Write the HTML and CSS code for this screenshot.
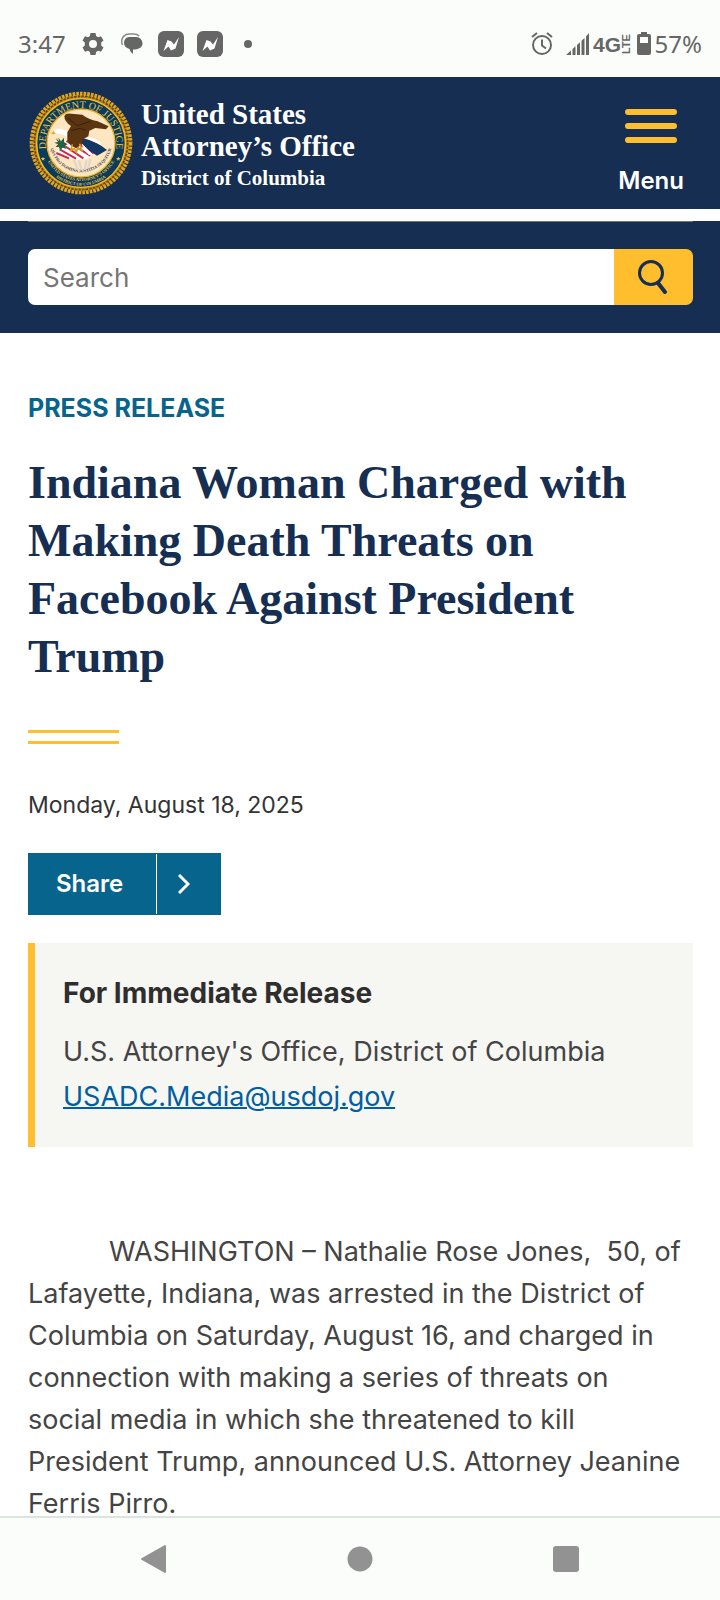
FILE: index.html
```html
<!DOCTYPE html>
<html lang="en">
<head>
<meta charset="utf-8">
<meta name="viewport" content="width=device-width, initial-scale=1">
<title>Press Release</title>
<link rel="stylesheet" href="styles.css">
</head>
<body>
<div class="status">
  <div class="status-left">
    <span class="time">3:47</span>
    <svg class="gear" width="22" height="22" viewBox="0 0 22 22" fill="#666"><path fill-rule="evenodd" d="M8.5 0h5l.6 3 2 1.200 2.900-1 2.500 4.300-2.300 2v3l2.300 2-2.500 4.300-2.900-1-2 1.200-.6 3h-5l-.6-3-2-1.200-2.900 1L.5 14.500l2.300-2v-3l-2.300-2L3 3.200l2.900 1 2-1.200zM11 7a4 4 0 1 0 0 8 4 4 0 0 0 0-8z"/></svg>
    <svg class="bubble" width="22" height="22" viewBox="0 0 22 22" fill="#666"><path d="M8 4h7c4 0 6.500 3 6.500 6.500S18.500 16 14 16.500h-2V21c-2-1.500-3-3-3.500-5C5 15 3 13 3 10s2-6 5-6z"/><path d="M1.500 12C-1 6 3 1 8 1h5c3 0 4 .8 5 2" fill="none" stroke="#8a8a8a" stroke-width="1.500"/></svg>
    <svg width="26" height="26" viewBox="0 0 26 26"><rect width="26" height="26" rx="6" fill="#666"/><path d="M5.500 20 9.500 9l4 1.500 2.500 3L21 6l-3.500 11.500-4.500 2-2.500-4z" fill="#fff"/></svg>
    <svg width="26" height="26" viewBox="0 0 26 26"><rect width="26" height="26" rx="6" fill="#666"/><path d="M5.500 20 9.500 9l4 1.500 2.500 3L21 6l-3.500 11.500-4.500 2-2.500-4z" fill="#fff"/></svg>
    <span class="dot"></span>
  </div>
  <div class="status-right">
    <svg class="alarm" width="22" height="24" viewBox="0 0 22 24" fill="none" stroke="#666" stroke-width="2"><circle cx="11" cy="13" r="9"/><path d="M11 7.500v6l4 3M1 5l5-4M21 5l-5-4"/></svg>
    <svg width="24" height="24" viewBox="0 0 24 24" fill="#666"><path d="M0 23 5 18.500V23zM6.500 17l3-2.700V23h-3zM11 13l3-2.800V23h-3zM15.500 8.800l3-2.800V23h-3zM20 4.600l3-3.600v22h-3z"/></svg>
    <svg class="lte" width="38" height="24" viewBox="0 0 38 24" fill="#666"><text class="fourg" x="0" y="20">4G</text><text class="lte-text" transform="translate(37 22) rotate(-90)">LTE</text></svg>
    <svg class="battery" width="14" height="23" viewBox="0 0 14 23"><path fill-rule="evenodd" fill="#666" d="M4 0h6v2h2q2 0 2 2v17q0 2-2 2H2q-2 0-2-2V4q0-2 2-2h2zM3 5v6h8V5z"/></svg>
    <span class="time">57%</span>
  </div>
</div>

<header class="masthead">
  <a class="brand" href="#">
    <svg class="seal" viewBox="0 0 312 312" role="img" aria-label="Department of Justice seal">
      <defs>
        <path id="arcTop" d="M52 177A106 106 0 1 1 260 177"/>
        <path id="arcMotto" d="M62 150A94 94 0 0 0 250 150"/>
        <path id="arcOffice" d="M42 156A114 114 0 0 0 270 156"/>
        <path id="arcDistrict" d="M28 156A128 128 0 0 0 284 156"/>
      </defs>
      <circle cx="156" cy="156" r="144" fill="#c88a0c"/>
      <circle cx="156" cy="156" r="148" fill="none" stroke="#e2a51a" stroke-width="12" stroke-dasharray="8 3"/>
      <circle cx="156" cy="156" r="140" fill="none" stroke="#5e430c" stroke-width="5" stroke-dasharray="7 4"/>
      <circle cx="156" cy="156" r="133" fill="#0b3b5c" stroke="#edbb31" stroke-width="4"/>
      <circle cx="156" cy="156" r="102" fill="#fee6c0" stroke="#f0b323" stroke-width="4"/>
      <text class="seal-top"><textPath href="#arcTop" startOffset="50%">DEPARTMENT OF JUSTICE</textPath></text>
      <text class="seal-motto"><textPath href="#arcMotto" startOffset="50%">QUI PRO DOMINA JUSTITIA SEQUITUR</textPath></text>
      <text class="seal-small"><textPath href="#arcOffice" startOffset="50%">UNITED STATES ATTORNEY’S OFFICE</textPath></text>
      <text class="seal-small"><textPath href="#arcDistrict" startOffset="50%">DISTRICT OF COLUMBIA</textPath></text>
      <path d="m42 197 2 4 5 .5-4 3 1 5-4-3-4 3 1-5-4-3 5-.5zM268 197l2 4 5 .5-4 3 1 5-4-3-4 3 1-5-4-3 5-.5z" fill="#edbb31"/>
      <path d="M134 205 146 236M150 208 158 238M172 208 168 236M184 204 178 232" stroke="#ddd8d0" stroke-width="7"/>
      <path d="M116 142 166 145 203 184 174 203 142 207 78 190 96 164z" fill="#fff"/>
      <path d="m112 150 72 44M103 162l60 40M92 175l49 28M82 186l38 16M124 143l70 44" stroke="#c92b4b" stroke-width="6"/>
      <path d="M158 140Q204 151 234 177L204 194Q171 172 158 158z" fill="#123765"/>
      <path d="M159 158 193 192 180 192 162 174zM169 141l46 20-2-9-28-14z" fill="#fff"/>
      <path d="M80 141 91 151 87 139 96 151 105 140 105 153 116 160 106 164 113 174 101 170 93 178 90 168 80 168 87 160 76 155 87 153z" fill="#206342"/>
      <path d="M67 125Q78 111 96 114L119 121 113 137Q95 125 80 128Z" fill="#fff"/>
      <path d="m65 127 9-7 6 8-7 2z" fill="#e7aa20"/>
      <path d="M106 75Q110 66 127 68L160 71Q178 85 206 91L239 106 231 115 199 111 181 119 178 136 162 145 158 161 142 171 126 164 115 150 115 124 126 105Q106 92 106 75z" fill="#5a3510"/>
      <path d="m115 80 30 24 40-13M126 119l28-7 17 6" stroke="#342212" stroke-width="3" fill="none"/>
      <path d="m130 160-4 18 10-6 6 12 4-13 12 7-6-20" fill="none" stroke="#d99b18" stroke-width="5"/>
    </svg>
    <span class="brand-text">
      <span class="brand-main">United States<br>Attorney’s Office</span>
      <span class="brand-sub">District of Columbia</span>
    </span>
  </a>
  <button class="menu" type="button">
    <svg width="52" height="34" viewBox="0 0 52 34" stroke="#ffbe2e" stroke-width="6" stroke-linecap="round"><path d="M3 3h46M3 17h46M3 31h46"/></svg>
    <span>Menu</span>
  </button>
</header>

<div class="search-band">
  <form class="search" role="search">
    <input class="search-input" type="search" placeholder="Search" aria-label="Search">
    <button class="search-button" type="button" aria-label="Search">
      <svg width="32" height="36" viewBox="0 0 32 36" fill="none" stroke="#162e51" stroke-width="3" stroke-linecap="round"><circle cx="13" cy="14" r="11.500"/><path d="M20 24l7 9" stroke-width="4"/></svg>
    </button>
  </form>
</div>

<main class="content">
  <p class="kicker">PRESS RELEASE</p>
  <h1 class="title">Indiana Woman Charged with Making Death Threats on Facebook Against President Trump</h1>
  <div class="rule"></div>
  <p class="date">Monday, August 18, 2025</p>
  <button class="share" type="button">
    <span class="share-label">Share</span>
    <span class="share-arrow"><svg width="12" height="20" viewBox="0 0 12 20" fill="none" stroke="#fff" stroke-width="3"><path d="m1 1 9 9-9 9"/></svg></span>
  </button>
  <section class="notice">
    <h2 class="notice-title">For Immediate Release</h2>
    <div class="notice-line">U.S. Attorney's Office, District of Columbia</div>
    <div class="notice-line"><a class="mail" href="mailto:USADC.Media@usdoj.gov">USADC.Media@usdoj.gov</a></div>
  </section>
  <p class="story">WASHINGTON – Nathalie Rose Jones,&nbsp; 50, of<br>Lafayette, Indiana, was arrested in the District of<br>Columbia on Saturday, August 16, and charged in<br>connection with making a series of threats on<br>social media in which she threatened to kill<br>President Trump, announced U.S. Attorney Jeanine<br>Ferris Pirro.</p>
</main>

<nav class="navbar" aria-label="System">
  <button class="nav-button" type="button" aria-label="Back"><svg width="28" height="30" viewBox="0 0 28 30"><path d="M25 2v26L2 15z" fill="#929292" stroke="#929292" stroke-width="2" stroke-linejoin="round"/></svg></button>
  <button class="nav-button" type="button" aria-label="Home"><svg width="26" height="26" viewBox="0 0 26 26"><circle cx="13" cy="13" r="12.500" fill="#929292"/></svg></button>
  <button class="nav-button" type="button" aria-label="Recents"><svg width="28" height="28" viewBox="0 0 28 28"><rect x="1" y="1" width="26" height="26" rx="3" fill="#929292"/></svg></button>
</nav>
</body>
</html>
```
FILE: styles.css
```css
* { box-sizing: border-box; }
body {
  margin: 0;
  height: 100vh;
  overflow: hidden;
  display: flex;
  flex-direction: column;
  background: #fff;
  color: #444;
  font-family: "Inter", "Liberation Sans", sans-serif;
}
button { border: 0; padding: 0; background: none; font: inherit; color: inherit; }
svg { display: block; flex: none; }
p, h1, h2 { margin: 0; }

.status {
  flex: none;
  display: flex;
  justify-content: space-between;
  height: 77px;
  padding: 10px 18px 0;
  background: #fbfdfa;
  color: #666;
}
.status-left, .status-right { display: flex; align-items: center; }
.status-left { gap: 13px; }
.gear { margin-left: 3px; }
.bubble { margin: 0 2px 0 4px; }
.time { font-family: "Noto Sans", sans-serif; font-size: 24px; line-height: 32px; }
.dot { width: 8px; height: 8px; margin-left: 8px; border-radius: 50%; background: #666; }
.alarm { margin-right: 13px; }
.battery { margin: 0 4px 0 6px; }
.lte { margin-left: 3px; }
.fourg { font: bold 21px "Liberation Sans", sans-serif; }
.lte-text { font: bold 11px "Liberation Sans", sans-serif; }

.masthead {
  flex: none;
  display: flex;
  align-items: center;
  justify-content: space-between;
  height: 132px;
  padding: 0 36px 0 29px;
  background: #162e51;
  color: #fff;
}
.brand { display: flex; align-items: center; gap: 8px; color: inherit; text-decoration: none; }
.seal { width: 104px; height: 104px; }
.brand-text { display: flex; flex-direction: column; padding-top: 6px; font-family: "Liberation Serif", serif; font-weight: bold; }
.brand-main { font-size: 29px; line-height: 32px; }
.brand-sub { font-size: 21px; line-height: 32px; }
.seal-top, .seal-small, .seal-motto { font-family: "Liberation Serif", serif; text-anchor: middle; }
.seal-top { font-size: 30px; fill: #e9c348; }
.seal-small { font-size: 13px; font-weight: bold; fill: #e9c348; }
.seal-motto { font-size: 13px; font-weight: bold; fill: #3d4450; }
.menu { display: flex; flex-direction: column; align-items: center; gap: 22px; padding-top: 20px; font-size: 24px; font-weight: 600; line-height: 32px; }

.search-band { flex: none; margin-top: 12px; padding: 0 27px 28px 28px; background: #162e51; }
.search { display: flex; padding-top: 27px; border-top: 1px solid #71767a; margin: 0; }
.search-input {
  flex: 1;
  min-width: 0;
  height: 56px;
  padding: 0 15px;
  border: 0;
  border-radius: 7px 0 0 7px;
  background: #fff;
  font-family: "Inter", sans-serif;
  font-size: 26px;
}
.search-input::placeholder { color: #757575; opacity: 1; }
.search-button {
  width: 79px;
  display: flex;
  align-items: center;
  justify-content: center;
  border-radius: 0 7px 7px 0;
  background: #ffbe2e;
}

.content { flex: 1; min-height: 0; overflow: hidden; padding: 59px 27px 0 28px; }
.kicker { font-size: 25px; font-weight: 700; line-height: 32px; color: #07648d; }
.title {
  margin-top: 30px;
  font-family: "Liberation Serif", serif;
  font-size: 46px;
  font-weight: bold;
  line-height: 58px;
  color: #162e51;
}
.rule { width: 91px; height: 14px; margin-top: 44px; border: solid #ffbe2e; border-width: 3px 0; }
.date { margin-top: 45px; font-size: 23px; line-height: 32px; color: #333; }
.share { display: flex; align-items: center; height: 62px; margin-top: 32px; background: #07648d; color: #fff; font-size: 24px; font-weight: 600; }
.share-label { width: 128px; padding-left: 28px; text-align: left; line-height: 60px; }
.share-arrow { display: flex; align-items: center; width: 65px; height: 60px; padding-left: 21px; border-left: 1px solid #fff; }
.notice { margin-top: 28px; padding: 29px 28px 28px; border-left: 7px solid #ffbe2e; background: #f6f6f2; font-size: 27px; line-height: 45px; }
.notice-title { margin-bottom: 15px; font-size: 28px; font-weight: 700; line-height: 42px; color: #2e2e2e; }
.mail { color: #005ea2; text-decoration-thickness: 2px; }
.story { margin-top: 84px; font-size: 27px; line-height: 42px; text-indent: 81px; white-space: nowrap; }

.navbar {
  flex: none;
  display: flex;
  justify-content: space-around;
  align-items: center;
  height: 84px;
  padding: 0 51px;
  border-top: 2px solid #dce4df;
  background: #fbfdfa;
}
.nav-button { display: flex; align-items: center; justify-content: center; width: 48px; height: 48px; }
```
